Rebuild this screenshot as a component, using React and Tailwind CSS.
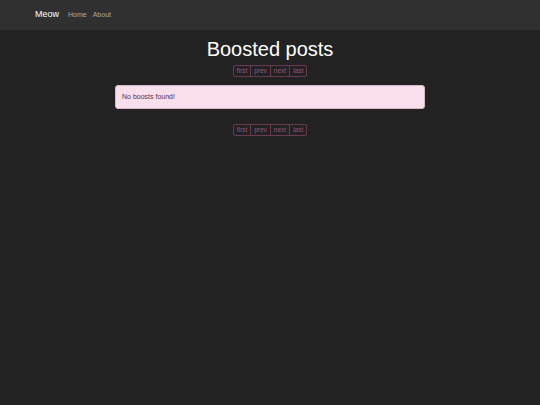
export default function App() {
  const pager = (
    <div className="flex justify-center">
      <div className="flex h-[12px] items-center rounded-[2px] border border-[#6b3a52] text-[6.5px] leading-none text-[#9a5578]">
        <span className="px-[3px]">first</span>
        <span className="flex h-full items-center border-l border-[#6b3a52] px-[3px]">prev</span>
        <span className="flex h-full items-center border-l border-[#6b3a52] px-[3px]">next</span>
        <span className="flex h-full items-center border-l border-[#6b3a52] px-[3px]">last</span>
      </div>
    </div>
  );

  return (
    <div
      className="min-h-[405px] bg-[#222222]"
      style={{ fontFamily: '"Liberation Sans", Arial, sans-serif' }}
    >
      <nav className="flex h-[30px] items-center bg-[#303030] px-[35px]">
        <span className="text-[9px] text-white">Meow</span>
        <span className="ml-[9px] text-[7px] text-[#a8a8a8]">Home</span>
        <span className="ml-[6px] text-[7px] text-[#a8a8a8]">About</span>
      </nav>

      <div className="mx-auto w-[310px]">
        <h1 className="mt-[7px] text-center text-[20px] leading-[24px] text-white">
          Boosted posts
        </h1>
        <div className="mt-[4px]">{pager}</div>
        <div className="mt-[8px] rounded-[3px] border border-[#d9b8c8] bg-[#f9dfeb] px-[6px] py-[7px] text-[7px] leading-[8px] text-[#5e2d48]">
          No boosts found!
        </div>
        <div className="mt-[15px]">{pager}</div>
      </div>
    </div>
  );
}
